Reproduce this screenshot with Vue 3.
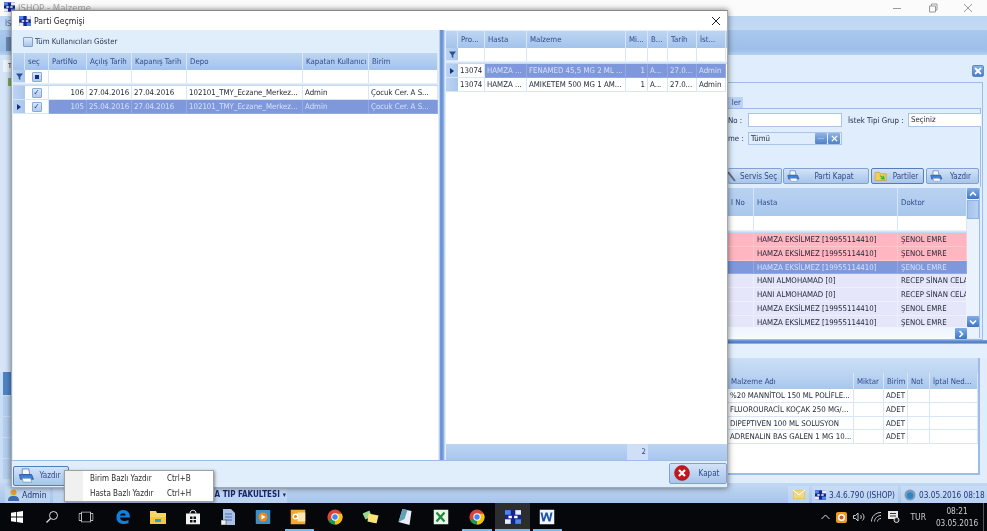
<script setup>
const leftHead = ['seç', 'PartiNo', 'Açılış Tarih', 'Kapanış Tarih', 'Depo', 'Kapatan Kullanıcı', 'Birim']
const leftRows = [
  { no: '106', open: '27.04.2016', close: '27.04.2016', depo: '102101_TMY_Eczane_Merkez...', user: 'Admin', unit: 'Çocuk Cer. A S...', sel: false },
  { no: '105', open: '25.04.2016', close: '27.04.2016', depo: '102101_TMY_Eczane_Merkez...', user: 'Admin', unit: 'Çocuk Cer. A S...', sel: true }
]
const rightHead = ['Pro...', 'Hasta', 'Malzeme', 'Mi...', 'B...', 'Tarih', 'İst...']
const rightRows = [
  { cells: ['13074', 'HAMZA ...', 'FENAMED 45,5 MG 2 ML ...', '1', 'A...', '27.0...', 'Admin'], sel: true },
  { cells: ['13074', 'HAMZA ...', 'AMIKETEM 500 MG 1 AM...', '1', 'A...', '27.0...', 'Admin'], sel: false }
]
const H = 'HAMZA EKSİLMEZ [19955114410]'
const patients = [
  { name: H, doc: 'ŞENOL EMRE', tone: 'pink' },
  { name: H, doc: 'ŞENOL EMRE', tone: 'pink' },
  { name: H, doc: 'ŞENOL EMRE', tone: 'sel' },
  { name: 'HANI ALMOHAMAD [0]', doc: 'RECEP SİNAN CELA', tone: 'lav' },
  { name: 'HANI ALMOHAMAD [0]', doc: 'RECEP SİNAN CELA', tone: 'lav' },
  { name: H, doc: 'ŞENOL EMRE', tone: 'lav' },
  { name: H, doc: 'ŞENOL EMRE', tone: 'lav' }
]
const materials = [
  '%20 MANNİTOL  150 ML POLİFLE...',
  'FLUOROURACİL KOÇAK 250 MG/...',
  'DIPEPTIVEN 100 ML SOLUSYON',
  'ADRENALIN BAS GALEN  1 MG 10...'
]
const strip = ['a', 'b', 'c', 'd']
</script>

<template>
  <div class="screen">
    <svg class="defs" width="0" height="0">
      <symbol id="logo" viewBox="0 0 14 12">
        <rect width="14" height="12" fill="#15258f" />
        <rect x="0" y="0" width="5" height="4" fill="#4f86ea" />
        <rect x="9" y="0" width="5" height="4" fill="#e8eefc" />
        <rect x="0" y="8" width="5" height="4" fill="#e8eefc" />
        <rect x="9" y="8" width="5" height="4" fill="#4f86ea" />
        <path d="M3 6h3M8 6h3" stroke="#fff" stroke-width="2" />
      </symbol>
      <symbol id="printer" viewBox="0 0 18 16">
        <path d="M5 1h7l1 6H5z" fill="#f4f8ff" stroke="#4a6fb0" stroke-width=".8" />
        <path d="M2 7h13l2 5H3z" fill="#3f7fd6" stroke="#2a4f96" stroke-width=".8" />
        <path d="M5 11h9l1 4H6z" fill="#fff" stroke="#7d97c4" stroke-width=".8" />
      </symbol>
      <symbol id="chrome" viewBox="0 0 20 20">
        <circle cx="10" cy="10" r="9.5" fill="#db4437" />
        <path d="M10 10 1.8 14.8A9.5 9.5 0 0 0 10 19.5L14.8 10z" fill="#0f9d58" />
        <path d="M10 19.5A9.5 9.5 0 0 0 18.5 5.8H10z" fill="#f4c20d" />
        <circle cx="10" cy="10" r="4.6" fill="#fff" />
        <circle cx="10" cy="10" r="3.4" fill="#4285f4" />
      </symbol>
    </svg>

    <div class="app">
      <header class="app-title">
        <svg class="app-logo"><use href="#logo" /></svg>
        <span>ISHOP - Malzeme</span>
        <div class="win-ctl">
          <svg width="10" height="10" viewBox="0 0 10 10"><path d="M1 5.5h8" stroke="#999" /></svg>
          <svg width="10" height="10" viewBox="0 0 10 10" fill="none" stroke="#999"><path d="M1.5 3h6v6h-6zM3.5 3V1h5.5v6H7.5" /></svg>
          <svg width="10" height="10" viewBox="0 0 10 10"><path d="M1 1l8 8M9 1l-8 8" stroke="#999" /></svg>
        </div>
      </header>
      <div class="menu-band"><span class="menu-tab">İS</span></div>
      <div class="ribbon-band"><span class="ribbon-item"></span></div>

      <div class="workspace">
        <aside class="strip">
          <div class="strip-top">
            <span class="strip-tab">T</span>
            <span class="strip-leaf"></span>
          </div>
          <div class="strip-sel"></div>
          <div v-for="s in strip" :key="s" class="strip-tile"></div>
        </aside>

        <section class="panel">
          <div class="panel-close-row">
            <button class="x-btn">
              <svg width="8" height="8" viewBox="0 0 8 8"><path d="M1 1l6 6M7 1L1 7" stroke="#fff" stroke-width="1.800" /></svg>
            </button>
          </div>

          <div class="group">
            <div class="tab-row"><span class="tab">ler</span></div>
            <div class="form-box">
              <div class="form-row">
                <label class="f-label">No :</label>
                <span class="input"></span>
                <label class="f-label2">İstek Tipi Grup :</label>
                <span class="input input-wide">Seçiniz</span>
              </div>
              <div class="form-row form-row2">
                <label class="f-label">me :</label>
                <span class="input combo">
                  <span class="combo-text">Tümü</span>
                  <i class="mini-btn">···</i>
                  <i class="mini-btn">
                    <svg width="7" height="7" viewBox="0 0 8 8"><path d="M1 1l6 6M7 1L1 7" stroke="#fff" stroke-width="1.500" /></svg>
                  </i>
                </span>
              </div>
              <div class="action-row">
                <button class="btn btn-servis">
                  <svg width="9" height="13" viewBox="0 0 9 13"><path d="M0 2l7 9" stroke="#5f6f86" stroke-width="2" /></svg>
                  Servis Seç
                </button>
                <button class="btn btn-kapat"><svg class="b-ico"><use href="#printer" /></svg><span>Parti Kapat</span></button>
                <button class="btn btn-parti">
                  <svg class="b-ico" viewBox="0 0 18 16">
                    <path d="M1 3h6l1 2h8v9H1z" fill="#f0cf52" stroke="#b9922c" stroke-width=".7" />
                    <path d="M8 7l3 2 2-2 1 6-6-1 2-2-3-2z" fill="#3cb52e" />
                  </svg>
                  <span>Partiler</span>
                </button>
                <button class="btn btn-yazdir"><svg class="b-ico"><use href="#printer" /></svg><span>Yazdır</span></button>
              </div>
            </div>

            <div class="pat-grid">
              <div class="pat-main">
                <div class="pat-row pat-head">
                  <span class="hc hc-first">l No</span><span class="hc">Hasta</span><span class="hc">Doktor</span>
                </div>
                <div class="pat-row pat-filter"><span class="fc"></span><span class="fc"></span><span class="fc"></span></div>
                <div class="sep"></div>
                <div class="pat-body">
                  <div v-for="(p, i) in patients" :key="i" class="pat-row pat-data" :class="p.tone">
                    <span class="c"></span><span class="c">{{ p.name }}</span><span class="c">{{ p.doc }}</span>
                  </div>
                </div>
                <div class="pat-foot">
                  <i class="scroll-btn">
                    <svg width="8" height="8" viewBox="0 0 8 8" fill="none"><path d="M2.500 1l3 3-3 3" stroke="#fff" stroke-width="1.600" /></svg>
                  </i>
                </div>
              </div>
              <div class="vscroll">
                <i class="scroll-btn">
                  <svg width="8" height="8" viewBox="0 0 8 8" fill="none"><path d="M1 5.500l3-3 3 3" stroke="#fff" stroke-width="1.600" /></svg>
                </i>
                <i class="thumb"></i>
                <i class="vspace"></i>
                <i class="scroll-btn">
                  <svg width="8" height="8" viewBox="0 0 8 8" fill="none"><path d="M1 2.500l3 3 3-3" stroke="#fff" stroke-width="1.600" /></svg>
                </i>
              </div>
            </div>
          </div>

          <div class="h-split"></div>
          <div class="lower-gap"></div>

          <div class="mat-box">
            <div class="mat-band"></div>
            <div class="mat-row mat-head">
              <span class="hc">Malzeme Adı</span><span class="hc">Miktar</span><span class="hc">Birim</span><span class="hc">Not</span><span class="hc">İptal Ned...</span>
            </div>
            <div v-for="m in materials" :key="m" class="mat-row mat-data">
              <span class="c">{{ m }}</span><span class="c"></span><span class="c">ADET</span><span class="c"></span><span class="c"></span>
            </div>
          </div>
          <div class="panel-rest"></div>
        </section>
      </div>

      <footer class="status">
        <div class="st st-admin">
          <svg width="11" height="12" viewBox="0 0 11 12"><circle cx="5.5" cy="3.5" r="3" fill="#e4a12c" /><path d="M0 12c0-4 2-5 5.500-5s5.500 1 5.500 5z" fill="#3c69b4" /></svg>
          <span>Admin</span>
        </div>
        <div class="st st-fac"><span>A TIP FAKULTESI</span><small>▾</small></div>
        <div class="st-fill"></div>
        <div class="st st-mail">
          <svg width="12" height="9" viewBox="0 0 12 9"><rect width="12" height="9" fill="#f5d77a" stroke="#c9a13f" stroke-width=".6" /><path d="M0 0l6 5 6-5" fill="none" stroke="#fff" /></svg>
        </div>
        <div class="st st-ver"><svg width="11" height="10"><use href="#logo" /></svg><span>3.4.6.790 (ISHOP)</span></div>
        <div class="st st-date">
          <svg width="12" height="12" viewBox="0 0 12 12"><circle cx="6" cy="6" r="5.500" fill="#7e99b8" /><circle cx="6" cy="6.500" r="3.200" fill="#2a86c4" /></svg>
          <span>03.05.2016 08:18</span>
        </div>
      </footer>
    </div>

    <nav class="taskbar">
      <svg class="tb-i win" width="12" height="12" viewBox="0 0 12 12"><path d="M0 1.700 5 1v4.600H0zM5.800.9 12 0v5.600H5.800zM0 6.400h5V11l-5-.7zM5.800 6.400H12V12l-6.200-.9z" fill="#fff" /></svg>
      <svg class="tb-i srch" width="13" height="13" viewBox="0 0 13 13" fill="none" stroke="#ddd"><circle cx="8" cy="5" r="4" /><path d="M5 8l-4 4" stroke-width="1.300" /></svg>
      <svg class="tb-i view" width="15" height="11" viewBox="0 0 15 11" fill="none" stroke="#bbb"><rect x="3" y=".5" width="9" height="10" /><path d="M3 2H.5v7H3M12 2h2.500v7H12" /></svg>
      <svg class="tb-i edge" width="15" height="15" viewBox="0 0 15 15"><path d="M1 8C1 3 4 .5 8 .5c4 0 6.500 3 6.500 7.500H4.500c.2 3 4 4.500 8.500 2.500v3.300C7 15.800.9 13.500 1 8zm3.500-2h5.800C10 3 5.500 3 4.500 6z" fill="#0f7fe0" /></svg>
      <svg class="tb-i expl" width="16" height="14" viewBox="0 0 16 14"><path d="M0 1h6l1 2h9v11H0z" fill="#f5d565" /><rect x="0" y="7" width="16" height="7" fill="#f0c93f" /><rect x="5" y="9" width="6" height="3" fill="#2f9bd8" /></svg>
      <svg class="tb-i store" width="14" height="15" viewBox="0 0 14 15"><path d="M0 4h14v11H0z" fill="#f2f2f2" /><path d="M4 4c0-4.500 6-4.500 6 0" fill="none" stroke="#f2f2f2" /><path d="M4 7h2.500v2.500H4zM7.500 7H10v2.500H7.500zM4 10.500h2.500V13H4zM7.500 10.500H10V13H7.500z" fill="#111" /></svg>
      <svg class="tb-i doc" width="14" height="16" viewBox="0 0 14 16"><path d="M2 0h8l4 4v12H2z" fill="#a9c0e4" /><path d="M4 5h7M4 8h7M4 11h7" stroke="#4a6db0" /><rect x="0" y="11" width="5" height="5" fill="#eee" stroke="#333" stroke-width=".5" /></svg>
      <svg class="tb-i media" width="15" height="14" viewBox="0 0 15 14"><rect width="15" height="14" rx="1" fill="#3b8fc4" /><circle cx="7.500" cy="7" r="4.500" fill="#f08a1c" /><path d="M6 4.500 10 7l-4 2.500z" fill="#fff" /></svg>
      <svg class="tb-i outl" width="15" height="15" viewBox="0 0 15 15"><rect width="15" height="15" fill="#f1a92c" /><rect x="7" y="3" width="8" height="9" fill="#fbe7b5" /><circle cx="5" cy="7" r="3" fill="#fff" /><circle cx="5" cy="7" r="1.500" fill="#e8801c" /></svg>
      <svg class="tb-i chr1" width="16" height="16"><use href="#chrome" /></svg>
      <svg class="tb-i note" width="17" height="13" viewBox="0 0 17 13"><path d="M0 3l7-3 2 6-6 3z" fill="#9bd58c" /><path d="M6 3l10 2-2 8-9-2z" fill="#f8e27a" /></svg>
      <svg class="tb-i pad" width="15" height="16" viewBox="0 0 15 16"><path d="M5 0l9 2-2 14-11-3z" fill="#e8eef3" /><path d="M5 0 1 13l6-3 3-9z" fill="#5ea1b8" /></svg>
      <svg class="tb-i xl" width="15" height="15" viewBox="0 0 15 15"><rect width="15" height="15" fill="#e9f5e6" /><path d="M3 3l8 9M11 3l-8 9" stroke="#1f8a3c" stroke-width="2.200" /></svg>
      <svg class="tb-i chr2" width="16" height="16"><use href="#chrome" /></svg>
      <div class="tb-active"><svg width="16" height="14"><use href="#logo" /></svg></div>
      <svg class="tb-i wd" width="15" height="15" viewBox="0 0 15 15"><rect width="15" height="15" fill="#f2f6fb" /><path d="M1 3l2 9h2l2-6 2 6h2l2-9h-2l-1.200 6L8 3H6L4.200 9 3 3z" fill="#1c57ae" /></svg>
      <i class="under u-o"></i><i class="under u-c"></i><i class="under u-i"></i><i class="under u-w"></i>

      <div class="tray">
        <svg width="9" height="6" viewBox="0 0 9 6" fill="none" stroke="#ddd"><path d="M.5 5l4-4 4 4" /></svg>
        <svg width="11" height="11" viewBox="0 0 11 11"><rect width="11" height="11" rx="2" fill="#f09a1e" /><circle cx="5.500" cy="5.500" r="3.500" fill="#fff" /><circle cx="5.500" cy="5.500" r="2" fill="#d9541e" /></svg>
        <svg width="12" height="10" viewBox="0 0 12 10" fill="none" stroke="#ccc"><path d="M.5 3.500h2L5 1v8L2.500 6.500h-2zM7.500 3c1 1 1 3 0 4M9.500 1.500c2 2 2 5 0 7" /></svg>
        <svg width="11" height="10" viewBox="0 0 11 10" fill="none" stroke="#ccc"><path d="M.5 9.500c0-5 4-9 9.500-9M3.500 9.500c0-3 3-6 6.500-6M6.500 9.500c0-1.500 1.500-3 3.500-3" /></svg>
        <svg width="12" height="12" viewBox="0 0 12 12"><path d="M0 0h10v8H0z" fill="#e8e8e8" /><path d="M2 2.500h6M2 5h6" stroke="#333" /><circle cx="8.500" cy="9" r="2.500" fill="#222" stroke="#ddd" /></svg>
        <span class="tur">TUR</span>
        <div class="clock"><span>08:21</span><span>03.05.2016</span></div>
      </div>
    </nav>

    <div class="dialog">
      <div class="d-title">
        <svg class="d-logo"><use href="#logo" /></svg>
        <span>Parti Geçmişi</span>
        <svg class="d-close" width="10" height="10" viewBox="0 0 10 10"><path d="M1 1l8 8M9 1l-8 8" stroke="#222" stroke-width="1" /></svg>
      </div>
      <div class="d-body">
        <div class="d-left">
          <div class="d-tool">
            <span class="chk-big"></span>
            <span>Tüm Kullanıcıları Göster</span>
          </div>
          <div class="grid">
            <div class="lrow ghead">
              <span class="hc"></span>
              <span v-for="h in leftHead" :key="h" class="hc">{{ h }}</span>
            </div>
            <div class="lrow gfilter">
              <span class="ind">
                <svg width="7" height="7" viewBox="0 0 7 7"><path d="M0 .5h7L4.300 4v3L2.700 6V4z" fill="#2d4f8f" /></svg>
              </span>
              <span class="fc cc"><i class="chk chk-sq"></i></span>
              <span v-for="n in 6" :key="n" class="fc"></span>
            </div>
            <div class="sep"></div>
            <div v-for="r in leftRows" :key="r.no" class="lrow gdata" :class="{ 'is-sel': r.sel }">
              <span class="ind"><i v-if="r.sel" class="arrow"></i></span>
              <span class="c cc chk-cell"><i class="chk">✓</i></span>
              <span class="c num">{{ r.no }}</span>
              <span class="c">{{ r.open }}</span>
              <span class="c">{{ r.close }}</span>
              <span class="c">{{ r.depo }}</span>
              <span class="c">{{ r.user }}</span>
              <span class="c">{{ r.unit }}</span>
            </div>
          </div>
        </div>

        <div class="d-split"></div>

        <div class="d-right">
          <div class="grid">
            <div class="rrow ghead">
              <span class="hc"></span>
              <span v-for="h in rightHead" :key="h" class="hc">{{ h }}</span>
            </div>
            <div class="rrow gfilter">
              <span class="ind">
                <svg width="7" height="7" viewBox="0 0 7 7"><path d="M0 .5h7L4.300 4v3L2.700 6V4z" fill="#2d4f8f" /></svg>
              </span>
              <span v-for="n in 7" :key="n" class="fc"></span>
            </div>
            <div class="sep"></div>
            <div v-for="(r, i) in rightRows" :key="i" class="rrow gdata" :class="{ 'is-sel': r.sel }">
              <span class="ind"><i v-if="r.sel" class="arrow"></i></span>
              <span class="c first">{{ r.cells[0] }}</span>
              <span class="c">{{ r.cells[1] }}</span>
              <span class="c">{{ r.cells[2] }}</span>
              <span class="c num">{{ r.cells[3] }}</span>
              <span class="c">{{ r.cells[4] }}</span>
              <span class="c">{{ r.cells[5] }}</span>
              <span class="c">{{ r.cells[6] }}</span>
            </div>
          </div>
          <div class="sum-band"><span class="sum-cell">2</span></div>
        </div>
      </div>
      <div class="d-foot">
        <button class="btn btn-print"><svg class="p-ico"><use href="#printer" /></svg><span>Yazdır</span></button>
        <button class="btn btn-close">
          <svg width="16" height="16" viewBox="0 0 16 16"><circle cx="8" cy="8" r="7.500" fill="#c4161c" stroke="#8e1015" stroke-width=".5" /><path d="M5 5l6 6M11 5l-6 6" stroke="#fff" stroke-width="2.200" /></svg>
          <span>Kapat</span>
        </button>
      </div>
    </div>

    <div class="ctx">
      <div class="ctx-row"><span>Birim Bazlı Yazdır</span><span class="ctx-key">Ctrl+B</span></div>
      <div class="ctx-row"><span>Hasta Bazlı Yazdır</span><span class="ctx-key">Ctrl+H</span></div>
    </div>
  </div>
</template>

<style scoped>
.screen {
  position: relative;
  width: 987px;
  height: 531px;
  overflow: hidden;
  display: flex;
  flex-direction: column;
  font-family: "DejaVu Sans Condensed", "Liberation Sans", Arial, sans-serif;
  font-size: 7.800px;
  color: #1c2433;
  background: #dfedfc;
  filter: blur(0.3px);
}
.defs { position: absolute; }
button { font-family: inherit; padding: 0; }
i { font-style: normal; }
svg { flex: none; }

/* background window */
.app { flex: 1; display: flex; flex-direction: column; min-height: 0; }
.app-title {
  height: 16px; flex: none; background: #fbfbfb; display: flex; align-items: flex-start;
  padding: 2px 0 0 4px; color: #a8a8a8; font-size: 9.500px; box-sizing: border-box;
}
.app-logo { width: 11px; height: 10px; margin-right: 3px; }
.win-ctl { margin-left: auto; width: 95px; display: flex; justify-content: space-between; padding: 1px 14px 0 0; box-sizing: border-box; gap: 20px; }
.menu-band { height: 14px; flex: none; background: linear-gradient(#bdd6f3, #c4daf3); padding-left: 5px; color: #3f5f9a; }
.menu-tab { line-height: 16px; }
.ribbon-band { height: 25px; flex: none; background: linear-gradient(#a9c8ee, #9dbfe8 80%, #b7d1f1); }
.ribbon-item { display: block; width: 5px; height: 14px; margin: 7px 0 0 6px; background: #6c8ab0; }
.workspace { flex: 1; min-height: 0; display: flex; justify-content: space-between; background: #dfedfc; }

.strip { width: 11px; display: flex; flex-direction: column; background: #c9ddf4; }
.strip-top { height: 317px; flex: none; background: #d6e6f8; }
.strip-tab { display: block; margin: 5px 0 0 3px; height: 12px; padding-left: 5px; font-size: 7px; background: #edf4fc; line-height: 12px; }
.strip-leaf { display: block; width: 3px; height: 8px; margin: 6px 0 0 8px; background: #7fb04f; }
.strip-sel { height: 23px; flex: none; background: #4f84c8; margin-left: 3px; }
.strip-tile { height: 20px; flex: none; margin: 1px 0 0 3px; background: #b5cfee; }

.panel { width: 259px; display: flex; flex-direction: column; color: #1c2433; }
.panel-close-row { height: 27px; flex: none; display: flex; justify-content: flex-end; align-items: flex-start; padding: 10px 3px 0 0; box-sizing: border-box; }
.x-btn {
  width: 12px; height: 12px; border: 1px solid #5d8acb; border-radius: 2px; background: linear-gradient(#87b0e6, #3f7bce);
  display: flex; align-items: center; justify-content: center;
}
.group { height: 258px; flex: none; border: 1px solid #9dbde8; border-left: none; margin-right: 4px; box-sizing: border-box; display: flex; flex-direction: column; background: #dfedfc; }
.tab-row { height: 25px; flex: none; display: flex; align-items: flex-end; }
.tab { height: 11px; width: 15px; background: #bcd4f2; color: #2e4a86; line-height: 11px; text-align: right; padding-right: 2px; box-sizing: border-box; }
.form-box { height: 79px; flex: none; border-top: 1px solid #9dbde8; border-right: 1px solid #9dbde8; margin-right: 1px; box-sizing: border-box; padding-top: 4px; display: flex; flex-direction: column; }
.form-row { display: flex; align-items: center; height: 14px; flex: none; }
.form-row2 { margin-top: 5px; height: 13px; }
.f-label { width: 20px; flex: none; color: #20304e; white-space: nowrap; }
.f-label2 { margin-left: 6px; width: 60px; flex: none; color: #20304e; white-space: nowrap; }
.input { width: 94px; flex: none; height: 100%; box-sizing: border-box; background: #fff; border: 1px solid #a9c4e6; line-height: 12px; padding-left: 2px; }
.input-wide { width: 73px; border-right: none; }
.combo { display: flex; align-items: center; background: #dfedfc; padding-right: 0; }
.combo-text { flex: 1; }
.mini-btn { width: 12px; height: 11px; margin-right: 1px; border-radius: 1px; background: linear-gradient(#8fb3e4, #4f82c8); color: #fff; font-size: 7px; display: flex; align-items: center; justify-content: center; }
.action-row { display: flex; gap: 1px; height: 16px; margin-top: 23px; flex: none; }
.btn {
  display: flex; align-items: center; border: 1px solid #7fa2d4; border-radius: 2px; box-sizing: border-box;
  background: linear-gradient(#d3e3f8, #bcd3f1 50%, #a9c5ea); color: #2f4b8a; font-size: 8px; white-space: nowrap; height: 100%;
}
.btn span { flex: 1; text-align: center; }
.b-ico { width: 14px; height: 12px; margin-left: 2px; flex: none; }
.btn-servis { width: 54px; gap: 3px; border-left: none; }
.btn-kapat { width: 86px; margin-right: 1px; }
.btn-parti { width: 53px; border: 1.500px solid #4f7dbd; margin-right: 1px; }
.btn-yazdir { width: 53px; }

.hc {
  display: flex; align-items: center; padding-left: 3px; border-right: 1px solid #d6e5f7; color: #2f4b8a;
  white-space: nowrap; overflow: hidden; min-width: 0;
}
.fc { border-right: 1px solid #d8e6f7; background: #fff; }
.c { display: block; padding: 0 2px; line-height: 13px; border-right: 1px solid #d8e6f7; border-bottom: 1px solid #d8e6f7; white-space: nowrap; overflow: hidden; min-width: 0; box-sizing: border-box; height: 14px; }
.sep { height: 3px; background: linear-gradient(#eef5fd, #bcd3f1); flex: none; }

.pat-grid { flex: 1; min-height: 0; display: flex; margin: 1px 2px 1px 0; border-right: 1px solid #9dbde8; background: #eaf3fd; }
.pat-main { width: 239px; flex: none; display: flex; flex-direction: column; }
.pat-row { display: grid; grid-template-columns: 26px 144px 69px; flex: none; }
.pat-head { height: 28px; background: linear-gradient(#b9d2f1, #a9c7ed); }
.pat-filter { height: 14px; }
.pat-body { height: 94px; flex: none; overflow: hidden; }
.pat-data { height: 13.800px; }
.pat-data .c { height: 13.800px; line-height: 13px; padding-left: 3px; }
.pat-data.pink .c { background: #ffb6c1; border-color: #fcc8d0; }
.pat-data.lav .c { background: #e6e6fa; border-color: #f0f0fc; }
.pat-data.sel .c { background: #7f98dc; color: #d6e0f8; border-color: #93a9e2; }
.pat-foot { flex: 1; display: flex; justify-content: flex-end; align-items: flex-start; padding-top: 1px; background: linear-gradient(#eef5fd, #f8fbff); }
.vscroll { flex: 1; display: flex; flex-direction: column; background: #eaf3fd; height: 139px; }
.scroll-btn { display: flex; align-items: center; justify-content: center; width: 12px; height: 11px; border-radius: 1px; background: linear-gradient(#84ade6, #3a76cc); flex: none; }
.thumb { display: block; height: 19px; flex: none; background: linear-gradient(90deg, #a5c3ec, #b8d1f1); margin: 1px 0; border: 1px solid #91b3e2; box-sizing: border-box; }
.vspace { flex: 1; }

.h-split { height: 4px; flex: none; background: linear-gradient(#7ba2dc, #4c7cc4 60%, #aac6ec); }
.lower-gap { height: 14px; flex: none; background: #e4f0fd; }
.mat-box { height: 117px; flex: none; margin-right: 7px; border: 2px solid #9dbde8; border-left: none; border-top: none; box-sizing: border-box; background: #fff; }
.mat-band { height: 15px; background: linear-gradient(#cbdff6, #bdd5f2); }
.mat-row { display: grid; grid-template-columns: 126px 30px 24px 22px 48px; }
.mat-head { height: 16px; background: linear-gradient(#bdd5f2, #a9c7ed); }
.mat-data .c { height: 13.800px; }
.panel-rest { flex: 1; }

.status { height: 20px; flex: none; display: flex; gap: 3px; padding-left: 5px; background: linear-gradient(#c2d8f3, #a6c4ea); box-sizing: border-box; padding-top: 3px; color: #20357f; font-size: 8.200px; position: relative; }
.st { display: flex; align-items: center; gap: 3px; background: linear-gradient(#c8dcf5, #b9d2f1); padding: 0 3px; box-sizing: border-box; white-space: nowrap; }
.st-admin { width: 45px; font-size: 8.600px; }
.st-fac { width: 234px; justify-content: flex-end; font-weight: 700; font-size: 8px; color: #18286f; padding-right: 1px; }
.st-fac small { font-size: 7px; }
.st-fill { flex: 1; }
.st-mail { width: 21px; justify-content: center; }
.st-ver { width: 86px; }
.st-date { width: 86px; }

/* taskbar */
.taskbar { height: 28px; flex: none; background: #06070b; position: relative; display: flex; align-items: center; color: #ddd; }
.tb-i { position: absolute; top: 50%; transform: translate(-50%, -50%); }
.win { left: 17px; } .srch { left: 52px; } .view { left: 86px; } .edge { left: 123px; }
.expl { left: 158px; } .store { left: 193px; } .doc { left: 228px; } .media { left: 263px; }
.outl { left: 298px; } .chr1 { left: 335px; } .note { left: 371px; } .pad { left: 405px; }
.xl { left: 441px; } .chr2 { left: 477px; } .wd { left: 547px; }
.tb-active { position: absolute; left: 495px; top: 0; width: 35px; height: 100%; background: #2b2d31; display: flex; align-items: center; justify-content: center; }
.under { position: absolute; bottom: 0; height: 2px; background: #76b9ed; }
.u-o { left: 285px; width: 29px; } .u-c { left: 462px; width: 30px; } .u-i { left: 495px; width: 35px; } .u-w { left: 533px; width: 29px; }
.tray { margin-left: auto; display: flex; align-items: center; gap: 6px; padding-right: 4px; border-right: 1px solid #555; height: 100%; margin-right: 3px; }
.tur { font-size: 8.500px; margin: 0 3px 0 4px; color: #ccc; }
.clock { display: flex; flex-direction: column; align-items: center; font-size: 8.200px; line-height: 12px; width: 44px; color: #ccc; }

/* dialog */
.dialog {
  position: absolute; left: 11px; top: 10px; width: 717px; height: 478px; display: flex; flex-direction: column;
  background: #e0eefc; box-shadow: 0 0 6px rgba(0, 0, 0, .55); border: 1px solid #a0a8b4; border-top-color: #888; box-sizing: border-box; z-index: 2;
}
.d-title { height: 19px; flex: none; background: #fff; display: flex; align-items: center; padding: 0 6px; gap: 3px; font-size: 8.600px; color: #222; }
.d-logo { width: 12px; height: 10px; margin-left: 1px; }
.d-close { margin-left: auto; }
.d-body { flex: 1; min-height: 0; display: flex; }
.d-left { width: 427px; flex: none; display: flex; flex-direction: column; padding-left: 1px; box-sizing: border-box; }
.d-tool { height: 23px; flex: none; display: flex; align-items: center; padding-left: 10px; gap: 2px; color: #2a3550; }
.chk-big { width: 10px; height: 10px; border: 1px solid #7ea0d0; border-radius: 1px; background: linear-gradient(#dfeafa, #a9c5ea); box-sizing: border-box; }
.grid { flex: 1; min-height: 0; background: #fff; display: flex; flex-direction: column; }
.d-left .grid { margin-right: 1px; }
.lrow { display: grid; grid-template-columns: 12px 24px 38px 45px 55px 116px 66px 69px; flex: none; }
.rrow { display: grid; grid-template-columns: 12px 27px 42px 99px 22px 20px 29px 29px; flex: none; }
.ghead { height: 17px; background: linear-gradient(#bdd5f2, #a4c3ec); }
.gfilter { height: 13px; }
.gdata { height: 14px; }
.ind { background: linear-gradient(90deg, #bcd4f2, #a9c6ec); display: flex; align-items: center; justify-content: center; border-bottom: 1px solid #d8e6f7; box-sizing: border-box; }
.arrow { width: 0; height: 0; border-left: 4px solid #12307f; border-top: 3px solid transparent; border-bottom: 3px solid transparent; }
.cc { display: flex; align-items: center; justify-content: center; padding: 0; }
.chk { width: 10px; height: 10px; display: flex; align-items: center; justify-content: center; border: 1px solid #8aa9d6; border-radius: 1px; box-sizing: border-box; background: linear-gradient(#d9e6f8, #b0cbee); color: #153a8e; font-size: 8px; font-weight: 700; line-height: 8px; }
.chk-sq::after { content: ""; width: 4px; height: 4px; background: #13307e; }
.num { text-align: right; }
.is-sel .c { background: #7f98dc; color: #d6e0f8; border-color: #93a9e2; }
.is-sel .c.chk-cell, .is-sel .c.first { background: #fff; color: #1c2433; border-color: #d8e6f7; }
.d-split { width: 6px; flex: none; background: linear-gradient(90deg, #dbe8f9, #5f8ad0 30%, #7ba2dc 70%, #dbe8f9); }
.d-right { flex: 1; min-width: 0; display: flex; flex-direction: column; padding: 1px 0 0 1px; box-sizing: border-box; }
.sum-band { height: 16px; flex: none; display: flex; background: linear-gradient(#bcd4f2, #a9c6ec); padding-left: 181px; }
.sum-cell { width: 21px; text-align: right; padding-right: 2px; box-sizing: border-box; background: #cfe0f6; line-height: 15px; color: #2f4b8a; }
.d-foot { height: 27px; flex: none; display: flex; justify-content: space-between; align-items: center; border-top: 1px solid #9dbde8; box-sizing: border-box; padding-left: 1px; }
.btn-print { width: 56px; height: 20px; margin-top: 3px; border: 1.500px solid #4f7dbd; }
.btn-print span { padding-right: 4px; }
.p-ico { width: 20px; height: 15px; margin-left: 2px; flex: none; }
.btn-close { width: 58px; height: 21px; margin-top: -2px; gap: 2px; padding-left: 4px; }

/* popup menu */
.ctx {
  position: absolute; left: 64px; top: 470px; width: 150px; height: 32px; box-sizing: border-box; z-index: 3;
  background: linear-gradient(90deg, #f0f0f0 18px, #fff 18px); border: 1px solid #a0a0a0; box-shadow: 1px 1px 3px rgba(0, 0, 0, .4);
  color: #2a2a2a; font-size: 8px;
}
.ctx-row { height: 15px; display: flex; align-items: center; padding-left: 25px; }
.ctx-key { position: absolute; left: 102px; }
</style>
